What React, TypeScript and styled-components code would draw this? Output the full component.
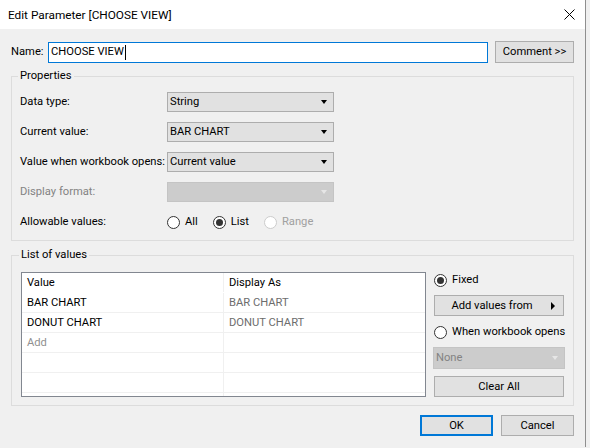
import React from "react";
import styled, { createGlobalStyle } from "styled-components";

const GlobalStyle = createGlobalStyle`
  html, body {
    margin: 0;
    padding: 0;
    background: #f0f0f0;
  }
  body {
    font-family: Roboto, "Liberation Sans", sans-serif;
    font-size: 11.2px;
    line-height: 14px;
    color: #000;
    white-space: nowrap;
  }
  * {
    box-sizing: border-box;
  }
`;

const Window = styled.div`
  width: 586px;
  height: 447px;
  border-right: 1px solid #8f8f8f;
  background: #f0f0f0;
  display: flex;
  flex-direction: column;
  overflow: hidden;
`;

const TitleBar = styled.div`
  height: 29px;
  flex-shrink: 0;
  background: #fff;
  display: flex;
  align-items: center;
  justify-content: space-between;
  padding: 0 10px 0 8px;
`;

const Title = styled.span`
  font-size: 11.8px;
`;

const Body = styled.div`
  padding: 12px 11px 0 11px;
  display: flex;
  flex-direction: column;
`;

const NameRow = styled.div`
  display: flex;
  align-items: center;
  height: 22px;
`;

const NameLabel = styled.span`
  width: 37px;
`;

const NameField = styled.div`
  width: 440px;
  height: 21px;
  border: 1px solid #0078d7;
  background: #fff;
  display: flex;
  align-items: center;
  padding-left: 2px;
  margin-right: 7px;
`;

const Caret = styled.span`
  display: inline-block;
  width: 1px;
  height: 15px;
  background: #000;
  margin-left: 1px;
`;

const Button = styled.div<{ $focused?: boolean; $width?: number; $height?: number }>`
  width: ${(p) => p.$width ?? 130}px;
  height: ${(p) => p.$height ?? 21}px;
  background: #e1e1e1;
  border: ${(p) => (p.$focused ? "2px solid #0078d7" : "1px solid #adadad")};
  display: flex;
  align-items: center;
  justify-content: center;
  position: relative;
`;

const Group = styled.fieldset<{ $top: number; $padTop: number; $padSide: number }>`
  margin: ${(p) => p.$top}px 0 0 0;
  padding: ${(p) => p.$padTop}px ${(p) => p.$padSide}px 8px ${(p) => p.$padSide}px;
  border: 1px solid #dcdcdc;
  min-width: 0;
`;

const Legend = styled.legend`
  padding: 0 2px;
  margin-left: -2px;
  line-height: 14px;
`;

const FormGrid = styled.div`
  display: grid;
  grid-template-columns: 147px 167px;
  grid-auto-rows: 20px;
  row-gap: 10px;
  align-items: center;
`;

const FieldLabel = styled.span<{ $disabled?: boolean; $width?: number }>`
  color: ${(p) => (p.$disabled ? "#838383" : "#000")};
  width: ${(p) => (p.$width ? `${p.$width}px` : "auto")};
`;

const Combo = styled.div<{ $disabled?: boolean; $height?: number; $width?: number }>`
  height: ${(p) => p.$height ?? 20}px;
  width: ${(p) => (p.$width ? `${p.$width}px` : "auto")};
  background: ${(p) => (p.$disabled ? "#cccccc" : "#e1e1e1")};
  border: 1px solid ${(p) => (p.$disabled ? "#c4c4c4" : "#adadad")};
  color: ${(p) => (p.$disabled ? "#838383" : "#000")};
  display: flex;
  align-items: center;
  justify-content: space-between;
  padding: 0 6px 0 2px;
`;

const Arrow = styled.span<{ $disabled?: boolean }>`
  width: 0;
  height: 0;
  border-left: 3.5px solid transparent;
  border-right: 3.5px solid transparent;
  border-top: 4px solid ${(p) => (p.$disabled ? "#e6e6e6" : "#000")};
`;

const RadioRow = styled.div<{ $mt?: number }>`
  display: flex;
  align-items: center;
  height: 20px;
  margin-top: ${(p) => p.$mt ?? 0}px;
`;

const RadioItem = styled.label<{ $disabled?: boolean }>`
  display: flex;
  align-items: center;
  gap: 5px;
  margin-right: 15px;
  color: ${(p) => (p.$disabled ? "#a0a0a0" : "#000")};
`;

const Circle = styled.span<{ $checked?: boolean; $disabled?: boolean }>`
  width: 13px;
  height: 13px;
  flex-shrink: 0;
  border-radius: 50%;
  border: 1px solid ${(p) => (p.$disabled ? "#cccccc" : "#333")};
  background: #fff;
  display: flex;
  align-items: center;
  justify-content: center;

  &::after {
    content: "";
    width: 7px;
    height: 7px;
    border-radius: 50%;
    background: ${(p) => (p.$checked ? "#333" : "transparent")};
  }
`;

const ListArea = styled.div`
  display: flex;
  gap: 8px;
`;

const Table = styled.div`
  width: 405px;
  height: 125px;
  border: 1px solid #828790;
  background: #fff;
  overflow: hidden;
  flex-shrink: 0;
`;

const TRow = styled.div<{ $line?: boolean }>`
  display: grid;
  grid-template-columns: 201px 1fr;
  height: 20px;
  border-bottom: 1px solid ${(p) => (p.$line ? "#f0f0f0" : "transparent")};
`;

const Cell = styled.div<{ $tone?: "main" | "dim" | "hint" }>`
  display: flex;
  align-items: center;
  padding-left: 5px;
  color: ${(p) => (p.$tone === "dim" ? "#6d6d6d" : p.$tone === "hint" ? "#909090" : "#000")};

  & + & {
    border-left: 1px solid #f0f0f0;
  }
`;

const SideColumn = styled.div`
  width: 130px;
  display: flex;
  flex-direction: column;
`;

const SideRadio = styled.div<{ $mt?: number }>`
  height: 16px;
  display: flex;
  align-items: center;
  gap: 5px;
  margin-top: ${(p) => p.$mt ?? 0}px;
`;

const Spaced = styled.div<{ $mt: number; $ml?: number }>`
  margin-top: ${(p) => p.$mt}px;
  margin-left: ${(p) => p.$ml ?? 0}px;
`;

const PlayArrow = styled.span`
  position: absolute;
  right: 8px;
  top: 6px;
  width: 0;
  height: 0;
  border-top: 4px solid transparent;
  border-bottom: 4px solid transparent;
  border-left: 4px solid #000;
`;

const ButtonText = styled.span`
  margin-right: 14px;
`;

const Footer = styled.div`
  display: flex;
  justify-content: flex-end;
  gap: 8px;
  margin-top: 9px;
`;

function CloseIcon() {
  return (
    <svg width="11" height="11" viewBox="0 0 11 11">
      <path d="M0.5 0.5 L10.5 10.5 M10.5 0.5 L0.5 10.5" stroke="#000" strokeWidth="1" />
    </svg>
  );
}

const values = [
  { value: "BAR CHART", display: "BAR CHART" },
  { value: "DONUT CHART", display: "DONUT CHART" },
];

export default function App() {
  return (
    <>
      <GlobalStyle />
      <Window>
        <TitleBar>
          <Title>Edit Parameter [CHOOSE VIEW]</Title>
          <CloseIcon />
        </TitleBar>
        <Body>
          <NameRow>
            <NameLabel>Name:</NameLabel>
            <NameField>
              CHOOSE VIEW
              <Caret />
            </NameField>
            <Button $width={79} $height={22}>Comment &gt;&gt;</Button>
          </NameRow>

          <Group $top={6} $padTop={9} $padSide={8}>
            <Legend>Properties</Legend>
            <FormGrid>
              <FieldLabel>Data type:</FieldLabel>
              <Combo>
                String
                <Arrow />
              </Combo>
              <FieldLabel>Current value:</FieldLabel>
              <Combo>
                BAR CHART
                <Arrow />
              </Combo>
              <FieldLabel>Value when workbook opens:</FieldLabel>
              <Combo>
                Current value
                <Arrow />
              </Combo>
              <FieldLabel $disabled>Display format:</FieldLabel>
              <Combo $disabled>
                <span />
                <Arrow $disabled />
              </Combo>
            </FormGrid>
            <RadioRow $mt={10}>
              <FieldLabel $width={147}>Allowable values:</FieldLabel>
              <RadioItem>
                <Circle />
                All
              </RadioItem>
              <RadioItem>
                <Circle $checked />
                List
              </RadioItem>
              <RadioItem $disabled>
                <Circle $disabled />
                Range
              </RadioItem>
            </RadioRow>
          </Group>

          <Group $top={7} $padTop={10} $padSide={9}>
            <Legend>List of values</Legend>
            <ListArea>
              <Table>
                <TRow>
                  <Cell>Value</Cell>
                  <Cell>Display As</Cell>
                </TRow>
                {values.map((v) => (
                  <TRow $line key={v.value}>
                    <Cell>{v.value}</Cell>
                    <Cell $tone="dim">{v.display}</Cell>
                  </TRow>
                ))}
                <TRow $line>
                  <Cell $tone="hint">Add</Cell>
                  <Cell />
                </TRow>
                {[0, 1, 2].map((i) => (
                  <TRow $line key={i}>
                    <Cell />
                    <Cell />
                  </TRow>
                ))}
              </Table>
              <SideColumn>
                <SideRadio>
                  <Circle $checked />
                  Fixed
                </SideRadio>
                <Spaced $mt={7}>
                  <Button $height={21}>
                    <ButtonText>Add values from</ButtonText>
                    <PlayArrow />
                  </Button>
                </Spaced>
                <SideRadio $mt={8}>
                  <Circle />
                  When workbook opens
                </SideRadio>
                <Spaced $mt={7} $ml={-1}>
                  <Combo $disabled $height={22} $width={132}>
                    None
                    <Arrow $disabled />
                  </Combo>
                </Spaced>
                <Spaced $mt={7}>
                  <Button $height={21}>Clear All</Button>
                </Spaced>
              </SideColumn>
            </ListArea>
          </Group>

          <Footer>
            <Button $focused $width={73} $height={21}>OK</Button>
            <Button $width={73} $height={21}>Cancel</Button>
          </Footer>
        </Body>
      </Window>
    </>
  );
}
